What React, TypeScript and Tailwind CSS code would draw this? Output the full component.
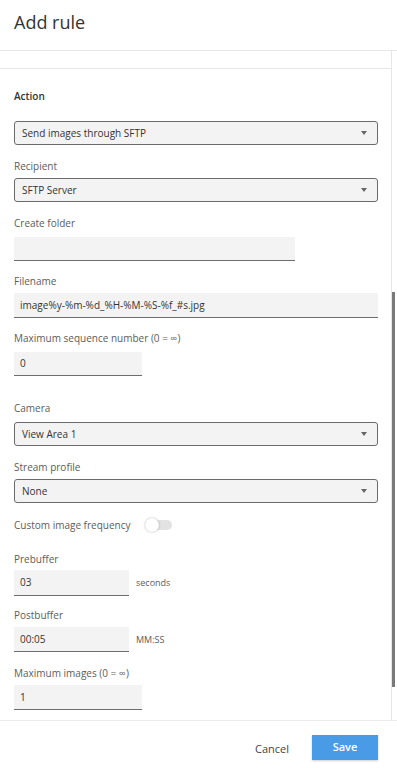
import React from "react";

const Label = ({ children, className = "" }: { children: React.ReactNode; className?: string }) => (
  <div className={`h-[14px] text-[10px] leading-[14px] text-[#5c5c5c] ${className}`}>{children}</div>
);

const Select = ({ value, className = "" }: { value: string; className?: string }) => (
  <div
    className={`h-[24px] w-[364px] flex items-center justify-between rounded-[3px] border border-[#6b6b6b] bg-[#f3f3f3] pl-[7px] pr-[10px] text-[10px] text-[#333] ${className}`}
  >
    <span>{value}</span>
    <svg width="6" height="4" viewBox="0 0 6 4">
      <path d="M0 0 L6 0 L3 4 Z" fill="#666" />
    </svg>
  </div>
);

const Input = ({ value, w, h = 24, className = "" }: { value: string; w: string; h?: number; className?: string }) => (
  <div
    className={`${w} ${h === 25 ? "h-[25px]" : h === 26 ? "h-[26px]" : "h-[24px]"} flex items-center border-b border-[#6e6e6e] bg-[#f3f3f3] pl-[6px] text-[10px] text-[#333] ${className}`}
  >
    {value}
  </div>
);

export default function App() {
  return (
    <div
      className="w-[397px] h-[768px] bg-white flex flex-col overflow-hidden"
      style={{ fontFamily: "'Open Sans', 'Noto Sans', sans-serif" }}
    >
      <div className="h-[51px] shrink-0 border-b border-[#e8e8e8] flex items-center pl-[14px] pb-[5px]">
        <span className="text-[18px] text-[#333]">Add rule</span>
      </div>
      <div className="h-[669px] shrink-0 flex">
        <div className="flex-1 flex flex-col">
          <div className="h-[18px] shrink-0 border-b border-[#e6e6e6]" />
          <div className="flex flex-col pl-[14px]">
            <Label className="mt-[20px] font-semibold text-[#333]">Action</Label>
            <Select value="Send images through SFTP" className="mt-[18px]" />
            <Label className="mt-[14px]">Recipient</Label>
            <Select value="SFTP Server" className="mt-[5px]" />
            <Label className="mt-[14px]">Create folder</Label>
            <Input value="" w="w-[281px]" className="mt-[7px]" />
            <Label className="mt-[13px]">Filename</Label>
            <Input value="image%y-%m-%d_%H-%M-%S-%f_#s.jpg" w="w-[364px]" h={25} className="mt-[5px]" />
            <Label className="mt-[13px]">Maximum sequence number (0 = ∞)</Label>
            <Input value="0" w="w-[128px]" className="mt-[7px]" />
            <Label className="mt-[25px]">Camera</Label>
            <Select value="View Area 1" className="mt-[7px]" />
            <Label className="mt-[14px]">Stream profile</Label>
            <Select value="None" className="mt-[5px]" />
            <div className="mt-[15px] h-[14px] flex items-center">
              <span className="text-[10px] leading-[14px] text-[#5c5c5c]">Custom image frequency</span>
              <div className="ml-[16px] relative w-[26px] h-[10px] rounded-full bg-[#e2e2e2]">
                <div className="absolute left-[-1px] top-[-2px] w-[14px] h-[14px] rounded-full bg-white shadow-[0_0_2px_rgba(0,0,0,0.35)]" />
              </div>
            </div>
            <Label className="mt-[20px]">Prebuffer</Label>
            <div className="mt-[4px] flex items-center">
              <Input value="03" w="w-[115px]" h={26} />
              <span className="ml-[7px] text-[9px] text-[#5c5c5c]">seconds</span>
            </div>
            <Label className="mt-[12px]">Postbuffer</Label>
            <div className="mt-[5px] flex items-center">
              <Input value="00:05" w="w-[115px]" h={25} />
              <span className="ml-[7px] text-[9px] text-[#5c5c5c]">MM:SS</span>
            </div>
            <Label className="mt-[14px]">Maximum images (0 = ∞)</Label>
            <Input value="1" w="w-[128px]" h={25} className="mt-[5px]" />
          </div>
        </div>
        <div className="w-[6px] shrink-0 border-l border-[#e6e6e6] flex flex-col">
          <div className="mt-[241px] w-[3px] h-[395px] bg-[#7a7a7a]" />
        </div>
      </div>
      <div className="flex-1 border-t border-[#ececec] flex justify-end items-start pr-[19px]">
        <span className="mt-[20px] mr-[23px] text-[11px] text-[#444]">Cancel</span>
        <div className="mt-[14px] w-[66px] h-[25px] bg-[#4a9be6] flex items-center justify-center text-[11px] font-semibold text-white shadow-[0_1px_2px_rgba(0,0,0,0.2)]">
          Save
        </div>
      </div>
    </div>
  );
}
